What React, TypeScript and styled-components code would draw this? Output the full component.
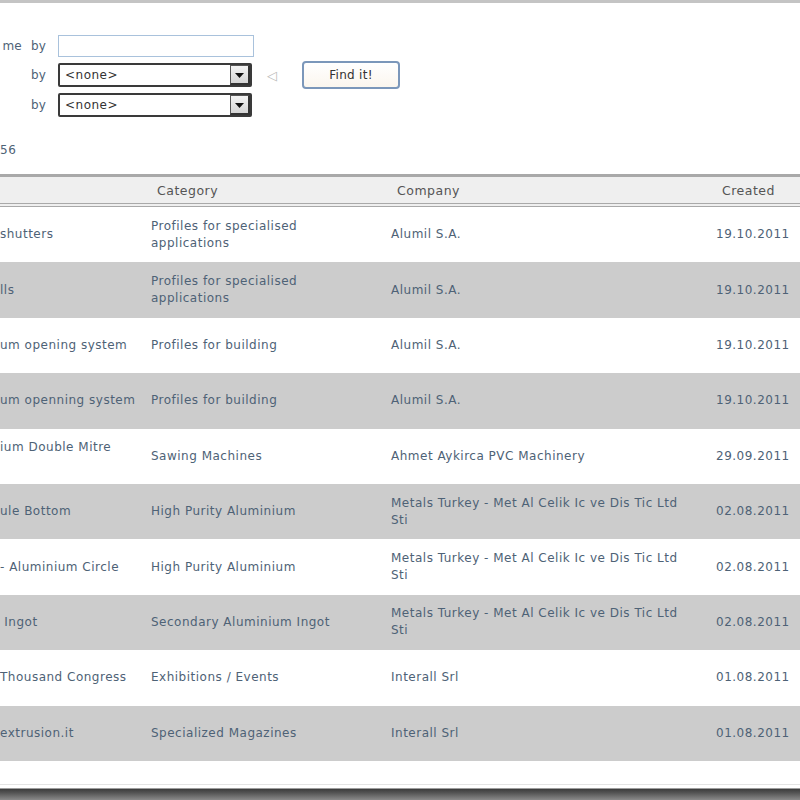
import styled, { createGlobalStyle } from "styled-components";

const GlobalStyle = createGlobalStyle`
  html, body {
    margin: 0;
    padding: 0;
    background: #fff;
    overflow: hidden;
  }
  body {
    font-family: "DejaVu Sans", Tahoma, Verdana, sans-serif;
  }
`;

type Item = {
    name: string;
    top?: boolean;
    category: string;
    company: string;
    created: string;
};

const items: Item[] = [
    { name: "shutters", category: "Profiles for specialised applications", company: "Alumil S.A.", created: "19.10.2011" },
    { name: "lls", category: "Profiles for specialised applications", company: "Alumil S.A.", created: "19.10.2011" },
    { name: "um opening system", category: "Profiles for building", company: "Alumil S.A.", created: "19.10.2011" },
    { name: "um openning system", category: "Profiles for building", company: "Alumil S.A.", created: "19.10.2011" },
    { name: "ium Double Mitre", top: true, category: "Sawing Machines", company: "Ahmet Aykirca PVC Machinery", created: "29.09.2011" },
    { name: "ule Bottom", category: "High Purity Aluminium", company: "Metals Turkey - Met Al Celik Ic ve Dis Tic Ltd Sti", created: "02.08.2011" },
    { name: "- Aluminium Circle", category: "High Purity Aluminium", company: "Metals Turkey - Met Al Celik Ic ve Dis Tic Ltd Sti", created: "02.08.2011" },
    { name: "\u00a0Ingot", category: "Secondary Aluminium Ingot", company: "Metals Turkey - Met Al Celik Ic ve Dis Tic Ltd Sti", created: "02.08.2011" },
    { name: "Thousand Congress", category: "Exhibitions / Events", company: "Interall Srl", created: "01.08.2011" },
    { name: "extrusion.it", category: "Specialized Magazines", company: "Interall Srl", created: "01.08.2011" },
];

function DropArrow() {
    return (
        <ArrowBox>
            <svg width="9" height="6" viewBox="0 0 9 6">
                <path d="M0 0h9L4.5 5z" fill="#111" />
            </svg>
        </ArrowBox>
    );
}

export default function App() {
    return (
        <Page>
            <GlobalStyle />
            <Search>
                <Label>
                    <span>me</span>
                    <span>by</span>
                </Label>
                <TextInput />
                <span />
                <span />

                <Label>by</Label>
                <Select>
                    <SelectValue>&lt;none&gt;</SelectValue>
                    <DropArrow />
                </Select>
                <Pointer>◁</Pointer>
                <FindButton>Find it!</FindButton>

                <Label>by</Label>
                <Select>
                    <SelectValue>&lt;none&gt;</SelectValue>
                    <DropArrow />
                </Select>
            </Search>

            <Count>56</Count>

            <Table>
                <HeadRow>
                    <HeadCell />
                    <HeadCell>Category</HeadCell>
                    <HeadCell>Company</HeadCell>
                    <HeadCell>Created</HeadCell>
                </HeadRow>
                {items.map((item, i) => (
                    <Row key={i} $odd={i % 2 === 1}>
                        <NameCell $top={item.top}>{item.name}</NameCell>
                        <Cell $wrap={200}>{item.category}</Cell>
                        <Cell $wrap={302}>{item.company}</Cell>
                        <Cell>{item.created}</Cell>
                    </Row>
                ))}
            </Table>

            <Footer />
        </Page>
    );
}

const Page = styled.div`
width: 800px;
height: 800px;
box-sizing: border-box;
border-top: 3px solid #c4c4c4;
display: flex;
flex-direction: column;
overflow: hidden;
color: #4e6276;
font-size: 12px;
letter-spacing: 0.5px;
`;

const Search = styled.div`
display: grid;
grid-template-columns: 46px 196px 24px auto;
grid-template-rows: 22px 24px 24px;
column-gap: 12px;
row-gap: 6px;
align-items: center;
justify-content: start;
padding-top: 32px;
`;

const Label = styled.div`
display: flex;
justify-content: flex-end;
align-items: center;
gap: 9px;
color: #4e6276;
white-space: nowrap;
letter-spacing: 0.2px;
`;

const TextInput = styled.div`
height: 22px;
box-sizing: border-box;
border: 1px solid #a9c2dc;
background: #fff;
`;

const Select = styled.div`
width: 194px;
height: 24px;
box-sizing: border-box;
border: 2px solid #3a3a3a;
border-radius: 2px;
display: flex;
align-items: center;
justify-content: space-between;
padding-left: 5px;
background: #fff;
`;

const SelectValue = styled.span`
color: #333;
font-size: 12px;
`;

const ArrowBox = styled.div`
width: 20px;
height: 20px;
box-sizing: border-box;
border: 1px solid #555;
border-right: 2px solid #333;
border-bottom: 2px solid #333;
background: linear-gradient(#f4f4f4, #d4d4d4);
display: flex;
align-items: center;
justify-content: center;
padding-top: 3px;
`;

const Pointer = styled.span`
color: #b9b9b9;
font-size: 13px;
padding-left: 1px;
`;

const FindButton = styled.button`
width: 98px;
height: 28px;
border: 2px solid #7b97ba;
border-radius: 4px;
background: linear-gradient(#ffffff, #fbf6ee);
color: #333;
font-family: "DejaVu Sans", Tahoma, sans-serif;
font-size: 12px;
letter-spacing: 0.3px;
padding: 0;
`;

const Count = styled.div`
margin-top: 26px;
height: 14px;
line-height: 14px;
color: #4e6276;
`;

const Table = styled.div`
margin-top: 17px;
display: flex;
flex-direction: column;
`;

const HeadRow = styled.div`
display: grid;
grid-template-columns: 151px 240px 325px 1fr;
height: 26px;
align-items: center;
background: #efefef;
border-top: 3px solid #a9a9a9;
border-bottom: 4px double #a9a9a9;
color: #555;
font-size: 12.5px;
`;

const HeadCell = styled.div`
padding-left: 6px;
white-space: nowrap;
`;

const Row = styled.div<{ $odd: boolean }>`
display: grid;
grid-template-columns: 151px 240px 325px 1fr;
height: 55.4px;
align-items: center;
background: ${(p) => (p.$odd ? "#cccccc" : "#ffffff")};
line-height: 17px;
`;

const NameCell = styled.div<{ $top?: boolean }>`
white-space: nowrap;
overflow: hidden;
align-self: ${(p) => (p.$top ? "start" : "center")};
padding-top: ${(p) => (p.$top ? "10px" : "0")};
`;

const Cell = styled.div<{ $wrap?: number }>`
max-width: ${(p) => (p.$wrap ? `${p.$wrap}px` : "none")};
white-space: ${(p) => (p.$wrap ? "normal" : "nowrap")};
`;

const Footer = styled.div`
margin-top: auto;
height: 15px;
border-top: 1px solid #e4e4e4;
background: linear-gradient(#ffffff 0, #ffffff 3px, #3c3c3c 4px, #555 8px, #8a8a8a 15px);
`;
